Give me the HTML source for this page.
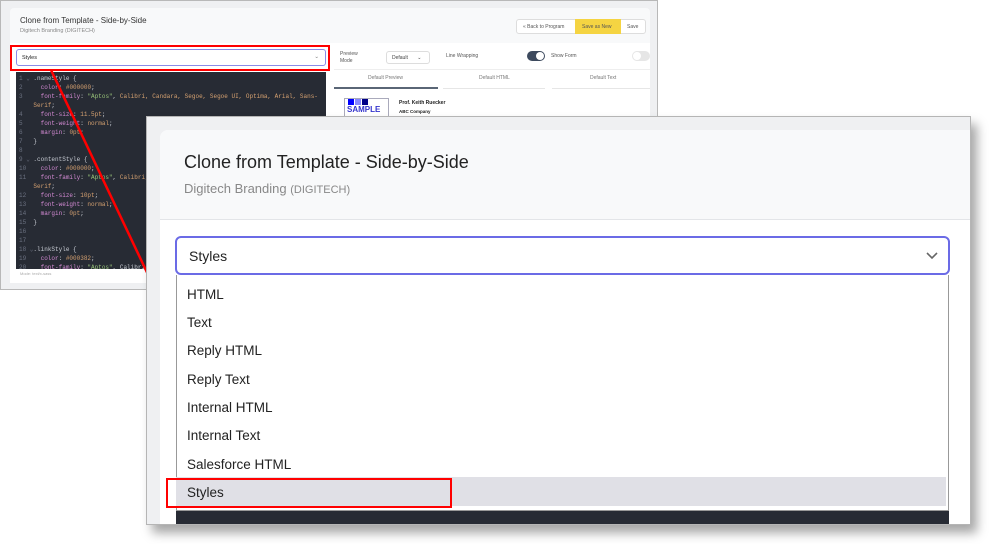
<!DOCTYPE html>
<html><head><meta charset="utf-8"><style>
*{box-sizing:border-box;margin:0;padding:0}
body{width:993px;height:544px;background:#fff;position:relative;overflow:hidden;font-family:"Liberation Sans",sans-serif}
.a{position:absolute}
.small{left:0;top:0;width:658px;height:290px;background:#eff0f2;border:1px solid #b8b8b8}
.card{left:9px;top:7px;width:640px;height:275px;background:#f8f9fa;border-radius:4px}
.code{left:15px;top:71px;width:310px;height:197px;background:#272b34;font-family:"Liberation Mono",monospace;font-size:6px;color:#c8ccd4;line-height:9px;padding:2px 0 0 3px;white-space:pre;overflow:hidden}
.ln{color:#6b7180}.p{color:#d48ad4}.o{color:#d4a070}.g{color:#98c379}.v{color:#e06c75}
.ov{left:146px;top:116px;width:825px;height:409px;background:#eff0f2;border:1px solid #b5b5b5;box-shadow:6px 8px 10px rgba(0,0,0,.35);overflow:hidden}
.ovc{left:13px;top:13px;width:830px;height:420px;background:#fff;border-radius:8px;overflow:hidden}
.hd{left:0;top:0;width:830px;height:90px;background:#f8f9fa;border-bottom:1px solid #e3e5e8}
.it{position:absolute;left:40px;font-size:13.5px;color:#222}
</style></head><body>
<div class="a small">
 <div class="a card"></div>
 <div class="a" style="left:19px;top:15px;font-size:8px;color:#333">Clone from Template - Side-by-Side</div>
 <div class="a" style="left:19px;top:27px;font-size:5.5px;color:#888">Digitech Branding (DIGITECH)</div>
 <div class="a" style="left:515px;top:18px;width:130px;height:15px;border:1px solid #ddd;border-radius:3px;background:#fff;font-size:5px;color:#555">
  <span class="a" style="left:6px;top:4px">« Back to Program</span>
  <span class="a" style="left:58px;top:-1px;width:46px;height:15px;background:#f5d442"></span>
  <span class="a" style="left:65px;top:4px">Save as New</span>
  <span class="a" style="left:110px;top:4px">Save</span></div>
 <div class="a" style="left:9px;top:42px;width:640px;height:240px;background:#fff"></div>
 <div class="a" style="left:15px;top:48px;width:310px;height:17px;border:1px solid #8b8be8;border-radius:3px;background:#fff;font-size:5.5px;color:#222;padding:5px 0 0 5px">Styles<span class="a" style="right:6px;top:4px;color:#777">⌄</span></div>
 <div class="a" style="left:9px;top:44px;width:320px;height:26px;border:2px solid #f00"></div>
 <div class="a code"><span class="ln">1 ⌄</span> .nameStyle {
<span class="ln">2</span>     <span class="p">color</span>: <span class="o">#000000</span>;
<span class="ln">3</span>     <span class="p">font-family</span>: <span class="g">"Aptos"</span>, <span class="o">Calibri, Candara, Segoe, Segoe UI, Optima, Arial, Sans-</span>
    <span class="o">Serif</span>;
<span class="ln">4</span>     <span class="p">font-size</span>: <span class="o">11.5pt</span>;
<span class="ln">5</span>     <span class="p">font-weight</span>: <span class="o">normal</span>;
<span class="ln">6</span>     <span class="p">margin</span>: <span class="o">0pt</span>;
<span class="ln">7</span>   }
<span class="ln">8</span>
<span class="ln">9 ⌄</span> .contentStyle {
<span class="ln">10</span>    <span class="p">color</span>: <span class="o">#000000</span>;
<span class="ln">11</span>    <span class="p">font-family</span>: <span class="g">"Aptos"</span>, <span class="o">Calibri,</span>
    <span class="o">Serif</span>;
<span class="ln">12</span>    <span class="p">font-size</span>: <span class="o">10pt</span>;
<span class="ln">13</span>    <span class="p">font-weight</span>: <span class="o">normal</span>;
<span class="ln">14</span>    <span class="p">margin</span>: <span class="o">0pt</span>;
<span class="ln">15</span>  }
<span class="ln">16</span>
<span class="ln">17</span>
<span class="ln">18 ⌄</span>.linkStyle {
<span class="ln">19</span>    <span class="p">color</span>: <span class="o">#000382</span>;
<span class="ln">20</span>    <span class="p">font-family</span>: <span class="g">"Aptos"</span>, Calibri</div>
 <div class="a" style="left:19px;top:270px;font-size:4px;color:#aaa">Mode: text/x-sass</div>
 <div class="a" style="left:339px;top:50px;font-size:5px;color:#555;line-height:7px">Preview<br>Mode</div>
 <div class="a" style="left:385px;top:50px;width:44px;height:13px;border:1px solid #ddd;border-radius:3px;font-size:5px;color:#444;padding:3px 0 0 5px">Default <span style="margin-left:8px">⌄</span></div>
 <div class="a" style="left:445px;top:52px;font-size:5px;color:#555">Line Wrapping</div>
 <div class="a" style="left:526px;top:50px;width:18px;height:10px;border-radius:5px;background:#3d4a5e"><span class="a" style="left:9px;top:1px;width:8px;height:8px;border-radius:4px;background:#fff"></span></div>
 <div class="a" style="left:550px;top:52px;font-size:5px;color:#555">Show Form</div>
 <div class="a" style="left:631px;top:50px;width:18px;height:10px;border-radius:5px;background:#e6e6e6"><span class="a" style="left:1px;top:1px;width:8px;height:8px;border-radius:4px;background:#fff"></span></div>
 <div class="a" style="left:333px;top:68px;width:316px;height:1px;background:#eee"></div>
 <div class="a" style="left:367px;top:74px;font-size:5px;color:#777">Default Preview</div>
 <div class="a" style="left:478px;top:74px;font-size:5px;color:#777">Default HTML</div>
 <div class="a" style="left:589px;top:74px;font-size:5px;color:#777">Default Text</div>
 <div class="a" style="left:333px;top:86px;width:104px;height:2px;background:#5a6676"></div>
 <div class="a" style="left:442px;top:87px;width:102px;height:1px;background:#e6e6e6"></div>
 <div class="a" style="left:551px;top:87px;width:98px;height:1px;background:#e6e6e6"></div>
 <div class="a" style="left:343px;top:97px;width:45px;height:20px;border:1px solid #aab"></div>
 <div class="a" style="left:347px;top:98px;width:6px;height:6px;background:#00f"></div>
 <div class="a" style="left:354px;top:98px;width:6px;height:6px;background:#88f"></div>
 <div class="a" style="left:361px;top:98px;width:6px;height:6px;background:#008"></div>
 <div class="a" style="left:346px;top:104px;font-size:8px;font-weight:bold;color:#33c">SAMPLE</div>
 <div class="a" style="left:398px;top:99px;font-size:5px;font-weight:bold;color:#222">Prof. Keith Ruecker</div>
 <div class="a" style="left:398px;top:108px;font-size:4.5px;font-weight:bold;color:#222">ABC Company</div>
</div>
<svg class="a" style="left:0;top:0" width="993" height="544"><line x1="51" y1="70" x2="245" y2="479" stroke="#f00" stroke-width="2.5"/></svg>
<div class="a ov">
 <div class="a ovc">
  <div class="a hd"></div>
  <div class="a" style="left:24px;top:22px;font-size:18px;color:#222">Clone from Template - Side-by-Side</div>
  <div class="a" style="left:24px;top:51px;font-size:13px;color:#888">Digitech Branding <span style="font-size:11px">(DIGITECH)</span></div>
  <div class="a" style="left:15px;top:106px;width:775px;height:39px;border:2px solid #6b6be6;border-radius:6px;background:#fff;font-size:14px;color:#222;padding:10px 0 0 12px">Styles
   <svg class="a" style="right:10px;top:14px" width="12" height="8"><path d="M1 1l5 5 5-5" fill="none" stroke="#666" stroke-width="1.6"/></svg></div>
  <div class="a" style="left:16px;top:145px;width:773px;height:236px;border:1px solid #999;border-top:none;background:#fff"></div>
  <div class="a" style="left:16px;top:347px;width:770px;height:29px;background:#e0e0e6"></div>
  <div class="a" style="left:16px;top:381px;width:773px;height:30px;background:#272b34"></div>
 </div>
 <div class="it" style="top:170px">HTML</div>
 <div class="it" style="top:198px">Text</div>
 <div class="it" style="top:226px">Reply HTML</div>
 <div class="it" style="top:255px">Reply Text</div>
 <div class="it" style="top:283px">Internal HTML</div>
 <div class="it" style="top:311px">Internal Text</div>
 <div class="it" style="top:340px">Salesforce HTML</div>
 <div class="it" style="top:368px">Styles</div>
</div>
<div class="a" style="left:166px;top:478px;width:286px;height:30px;border:2px solid #f00"></div>
</body></html>
